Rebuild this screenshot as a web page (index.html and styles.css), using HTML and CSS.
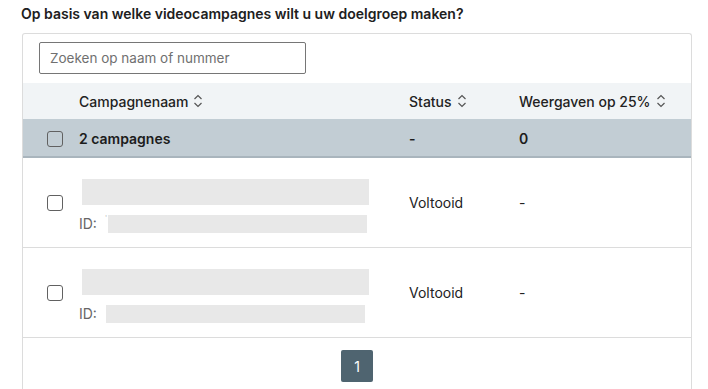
FILE: index.html
```html
<!DOCTYPE html>
<html lang="nl">
<head>
<meta charset="utf-8">
<link rel="stylesheet" href="styles.css">
</head>
<body>
<div class="page">
  <h1 class="title">Op basis van welke videocampagnes wilt u uw doelgroep maken?</h1>
  <div class="panel">
    <div class="search-bar">
      <input class="search" type="text" placeholder="Zoeken op naam of nummer">
    </div>
    <div class="row head">
      <div class="cell"></div>
      <div class="cell">Campagnenaam <svg class="sort" viewBox="0 0 10 14"><path d="M1.5 5 5 1.5 8.5 5M1.5 9 5 12.5 8.5 9"/></svg></div>
      <div class="cell">Status <svg class="sort" viewBox="0 0 10 14"><path d="M1.5 5 5 1.5 8.5 5M1.5 9 5 12.5 8.5 9"/></svg></div>
      <div class="cell">Weergaven op 25% <svg class="sort" viewBox="0 0 10 14"><path d="M1.5 5 5 1.5 8.5 5M1.5 9 5 12.5 8.5 9"/></svg></div>
    </div>
    <div class="row summary">
      <div class="cell"><span class="check"></span></div>
      <div class="cell">2 campagnes</div>
      <div class="cell">-</div>
      <div class="cell">0</div>
    </div>
    <div class="row item">
      <div class="cell"><span class="check"></span></div>
      <div class="cell name">
        <div class="ph ph-name"></div>
        <div class="idline"><span class="id">ID:</span><span class="tick">'</span><div class="ph ph-id"></div></div>
      </div>
      <div class="cell">Voltooid</div>
      <div class="cell">-</div>
    </div>
    <div class="row item">
      <div class="cell"><span class="check"></span></div>
      <div class="cell name">
        <div class="ph ph-name"></div>
        <div class="idline"><span class="id">ID:</span><div class="ph ph-id ph-id2"></div></div>
      </div>
      <div class="cell">Voltooid</div>
      <div class="cell">-</div>
    </div>
    <div class="pager">
      <button class="page-btn">1</button>
    </div>
  </div>
</div>
</body>
</html>
```

FILE: styles.css
```css
* { box-sizing: border-box; }
html, body { margin: 0; padding: 0; background: #fff; }
body {
  font-family: Inter, "Noto Sans", "Liberation Sans", sans-serif;
  font-size: 14px;
  color: #1f1f1f;
}
.page { padding: 5px 16px 0 21px; }
.title {
  margin: 0 0 11px 0;
  font-size: 14px;
  font-weight: 600;
  line-height: 17px;
  color: #202020;
}
.panel {
  margin-left: 1px;
  border: 1px solid #dcdcdc;
  border-bottom: none;
  border-radius: 3px 3px 0 0;
}
.search-bar { padding: 8px 16px 9px 16px; }
.search {
  display: block;
  width: 267px;
  height: 32px;
  border: 1px solid #767676;
  border-radius: 2px;
  padding: 0 10px;
  font-family: inherit;
  font-size: 13.5px;
  color: #333;
  outline: none;
}
.search::placeholder { color: #707070; }
.row {
  display: grid;
  grid-template-columns: 56px 330px 110px 1fr;
  align-items: center;
}
.cell { display: flex; align-items: center; }
.head {
  height: 36px;
  background: #f1f4f6;
  font-weight: 500;
  color: #222;
}
.sort {
  width: 10px;
  height: 14px;
  margin-left: 5px;
  fill: none;
  stroke: #555;
  stroke-width: 1.2;
}
.summary {
  height: 39px;
  padding-top: 2px;
  background: #c2cdd4;
  border-bottom: 2px solid #a9b5bd;
  font-weight: 600;
  color: #1c1c1c;
}
.check {
  display: block;
  width: 16px;
  height: 16px;
  margin-left: 24px;
  border: 1px solid #616161;
  border-radius: 3px;
  background: #fff;
}
.summary .check { background: transparent; }
.item {
  height: 90px;
  border-bottom: 1px solid #dcdcdc;
  color: #222;
}
.name {
  flex-direction: column;
  align-items: stretch;
  gap: 10px;
  margin-top: 6px;
}
.ph { background: #e8e8e8; }
.ph-name { height: 26px; width: 287px; margin-left: 3px; }
.idline { display: flex; align-items: center; height: 18px; }
.id { color: #666; width: 26px; }
.tick { color: #bbb; font-size: 7px; width: 3px; align-self: flex-start; line-height: 8px; }
.ph-id { height: 18px; width: 259px; }
.ph-id2 { margin-left: 1px; }
.pager {
  height: 52px;
  display: flex;
  justify-content: center;
  align-items: flex-start;
  padding-top: 12px;
}
.page-btn {
  width: 32px;
  height: 32px;
  border: none;
  border-radius: 2px;
  background: #4f6470;
  color: #fff;
  font-family: inherit;
  font-size: 14px;
  padding: 0;
}
```
